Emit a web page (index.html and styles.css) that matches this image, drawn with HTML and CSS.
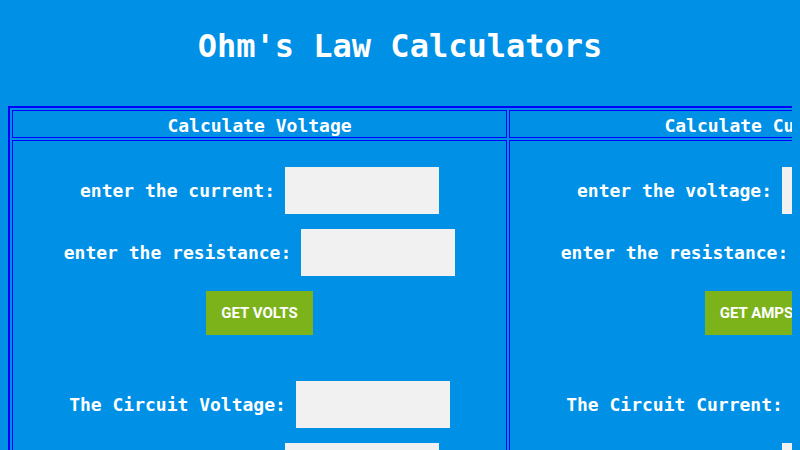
FILE: index.html
```html
<!DOCTYPE html>
<html lang="en">
<head>
    <meta charset="UTF-8">
    <title>Ohm's Law Calculators</title>
    <link rel="stylesheet" href="styles.css">
</head>
<body>
<h1 class="title">Ohm's Law Calculators</h1>
<table class="calcs">
    <tr>
        <th>Calculate Voltage</th>
        <th>Calculate Current</th>
        <th>Calculate Resistance</th>
    </tr>
    <tr>
        <td>
            <div class="field">
                <label for="v-current">enter the current:</label>
                <input type="text" id="v-current">
            </div>
            <div class="field">
                <label for="v-resistance">enter the resistance:</label>
                <input type="text" id="v-resistance">
            </div>
            <div class="action">
                <button class="btn">Get Volts</button>
            </div>
            <div class="field result">
                <label for="v-out">The Circuit Voltage:</label>
                <input type="text" id="v-out" readonly>
            </div>
            <div class="field">
                <label for="v-power">The Circuit Power:</label>
                <input type="text" id="v-power" readonly>
            </div>
        </td>
        <td>
            <div class="field">
                <label for="a-voltage">enter the voltage:</label>
                <input type="text" id="a-voltage">
            </div>
            <div class="field">
                <label for="a-resistance">enter the resistance:</label>
                <input type="text" id="a-resistance">
            </div>
            <div class="action">
                <button class="btn">Get Amps</button>
            </div>
            <div class="field result">
                <label for="a-out">The Circuit Current:</label>
                <input type="text" id="a-out" readonly>
            </div>
            <div class="field">
                <label for="a-power">The Circuit Power:</label>
                <input type="text" id="a-power" readonly>
            </div>
        </td>
        <td>
            <div class="field">
                <label for="r-voltage">enter the voltage:</label>
                <input type="text" id="r-voltage">
            </div>
            <div class="field">
                <label for="r-current">enter the current:</label>
                <input type="text" id="r-current">
            </div>
            <div class="action">
                <button class="btn">Get Ohms</button>
            </div>
            <div class="field result">
                <label for="r-out">The Circuit Resistance:</label>
                <input type="text" id="r-out" readonly>
            </div>
            <div class="field">
                <label for="r-power">The Circuit Power:</label>
                <input type="text" id="r-power" readonly>
            </div>
        </td>
    </tr>
</table>
</body>
</html>
```

FILE: styles.css
```css
html{
    overflow-x: hidden;
}
body{
    margin: 8px;
    background: #0091e6;
    color: #fff;
    font-family: "DejaVu Sans Mono", monospace;
    font-weight: bold;
}
.title{
    margin: 19px 0 41px;
    font-size: 32px;
    text-align: center;
}
/* three calculators side by side, each column 495px */
.calcs{
    table-layout: fixed;
    width: 1497px;
    border: 2px solid #0000ff;
    border-spacing: 2px;
}
.calcs th,
.calcs td{
    border: 1px solid #0000ff;
    font-size: 18px;
    white-space: nowrap;
}
.calcs th{
    padding: 4px 0 0;
    line-height: 22px;
}
.calcs td{
    vertical-align: top;
    padding: 26px 0 20px;
}
.field{
    display: flex;
    justify-content: center;
    align-items: center;
    gap: 10px;
    margin-bottom: 15px;
}
.field input{
    width: 154px;
    height: 47px;
    box-sizing: border-box;
    border: none;
    background: #f1f1f1;
    font-size: 16px;
}
.action{
    display: flex;
    justify-content: center;
}
.btn{
    padding: 0 15px;
    height: 44px;
    border: none;
    background: #7cb31b;
    color: #fff;
    font-family: Roboto, sans-serif;
    font-weight: bold;
    font-size: 15px;
    text-transform: uppercase;
}
.result{
    margin-top: 46px;
}
```
